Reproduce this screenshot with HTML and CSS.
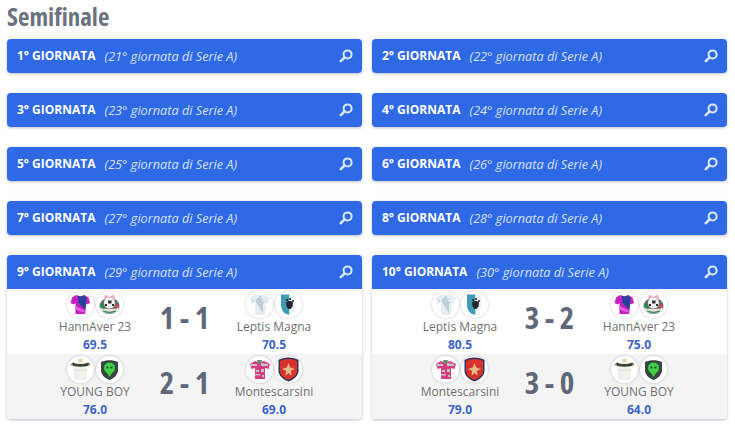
FILE: index.html
```html
<!DOCTYPE html>
<html lang="it">
<head>
  <meta charset="UTF-8">
  <title>Semifinale</title>
  <link rel="stylesheet" href="styles.css">
</head>
<body>
  <svg class="sprites" width="0" height="0">
    <symbol id="search" viewBox="0 0 14 14">
      <circle cx="8.6" cy="5.4" r="4" fill="none" stroke="currentColor" stroke-width="2"/>
      <path d="M5.6 8.4 1.8 12.2" stroke="currentColor" stroke-width="2.6" stroke-linecap="round"/>
    </symbol>
    <symbol id="hann-shirt" viewBox="0 0 27 27">
      <path d="M9 4 5 6.500 3.500 12l3.500 1.500L8.500 12v11h10V12l1.500 1.500L23 12l-1.500-5.500L17.500 4l-4 1.500z" fill="#c81fc4"/>
      <path d="M11 4.500 13.500 5.500 16 4.500 19.500 6.500 18.500 19 11.500 12z" fill="#24409a"/>
      <path d="M8.500 15l10 5v2l-10-3.500z" fill="#e05fe0"/>
    </symbol>
    <symbol id="hann-badge" viewBox="0 0 27 27">
      <ellipse cx="13.500" cy="15" rx="10" ry="8" fill="#5d6f66"/>
      <path d="M9 3.500l4 2.500 5-2.500 1 5H8z" fill="#e6a8c8"/>
      <circle cx="13.500" cy="12" r="5.500" fill="#f1f1f1"/>
      <path d="M12 9.500h3.500v3H12zM9 13h2v2H9zM16 13h2v2h-2z" fill="#333"/>
      <path d="M3.500 16c4 2.500 16 2.500 20 0l-1.500 4.500c-4 2.500-13 2.500-17 0z" fill="#e9dcdc"/>
      <path d="M4 13l4 1.500v3.500l-4-1.500z" fill="#2f8a58"/>
      <path d="M23 13l-4 1.500v3.500l4-1.500z" fill="#c94b4b"/>
      <path d="M7 19.500c4 1.500 9 1.500 13 0l-.5 1.500c-4 1.200-8 1.200-12 0z" fill="#2f8a58"/>
    </symbol>
    <symbol id="leptis-shirt" viewBox="0 0 27 27">
      <path d="M9 3.500 3.500 7 5.500 13l3.500-1v12h10V12l2.500 1L24 7l-6-3.500-4 1.500z" fill="#e6edf0"/>
      <path d="M16 4c-4 2-7 4.500-6 7 1 3 3.500 3.500 4 7l3 4V13l2-2-3.500-1 2-3-3.500 1z" fill="#bccfd8"/>
      <path d="M6 8l3 2-3 1zM20 15h-1v5z" fill="#cddbe2"/>
    </symbol>
    <symbol id="leptis-badge" viewBox="0 0 27 27">
      <path d="M6 3.500H14.500V24L10 22.500C7 20 6 17 6 13.500z" fill="#3f9cb4"/>
      <path d="M14.500 3.500H20V14c0 4-2 7.500-5.500 10z" fill="#eef3f5"/>
      <path d="M11 11.500l2-1.500h3l2 1.500-.5 4-2 2.500h-2l-2-2.500z" fill="#23282c"/>
      <circle cx="12" cy="9" r="1.100" fill="#23282c"/>
      <circle cx="15" cy="8" r="1.100" fill="#23282c"/>
      <circle cx="18" cy="10" r="1.100" fill="#23282c"/>
    </symbol>
    <symbol id="young-shirt" viewBox="0 0 27 27">
      <path d="M7 7h13l3 4-3 2.500V24H7V13.500L4 11z" fill="#f1f1ec"/>
      <path d="M7 13.500h13v1.500H7z" fill="#e6e6e0"/>
      <path d="M3.500 8.500c4 3 16 3 20 0l-2.500-2c-4 2-11 2-15 0z" fill="#3c3d33"/>
      <path d="M10.500 3h6L15.500 6.500h-4z" fill="#e3d9a8"/>
      <path d="M3.500 9l2-1v2zM23.500 9l-2-1v2z" fill="#d9c98a"/>
    </symbol>
    <symbol id="young-badge" viewBox="0 0 27 27">
      <path d="M5 6c5-2.500 12-2.500 17 0v8c0 4.500-3.500 8-8.500 10C8.500 22 5 18.500 5 14z" fill="#3a4640"/>
      <ellipse cx="13.500" cy="12" rx="5.500" ry="5.500" fill="#3fd148"/>
      <path d="M10.500 16h6l-3 5z" fill="#3fd148"/>
      <circle cx="11.500" cy="11.500" r="1.100" fill="#1d3a20"/>
      <circle cx="15.500" cy="11.500" r="1.100" fill="#1d3a20"/>
    </symbol>
    <symbol id="monte-shirt" viewBox="0 0 27 27">
      <path d="M9 5 4 8l1.500 5 3.500-1v11h10V12l3.500 1L24 8l-6-3-4.500 1.500z" fill="#d83c80"/>
      <path d="M5 8h6v2H5zM15 7l7 1v2h-7zM10 14h3v2h-3zM15 13h3v3h-3zM9 18h5v1.500H9zM16 19h2v2h-2z" fill="#bfc7c5"/>
      <path d="M11 4h5l-1 3.500h-3z" fill="#5f8f6e"/>
    </symbol>
    <symbol id="monte-badge" viewBox="0 0 27 27">
      <path d="M13.500 1.500c4.500 0 7.500 1 10 2.500V15c0 4.500-4.500 8.500-10 10.500C8 23.500 3.500 19.500 3.500 15V4C6 2.500 9 1.500 13.500 1.500z" fill="#2c3566"/>
      <path d="M13.500 3c4 0 6.500.8 8.500 2V15c0 4-3.500 7-8.500 9C8.500 22 5 19 5 15V5c2-1.200 4.500-2 8.500-2z" fill="#d9322a"/>
      <path d="M13.500 7l1.800 4.500L20 13l-4 1.800.5 5L13.500 17l-3 2.800.5-5-4-1.800 4.700-1.500z" fill="#e3b98a"/>
    </symbol>
  </svg>

  <h1 class="title">Semifinale</h1>

  <div class="rounds">
    <div class="round">
      <div class="round-head"><b>1° GIORNATA</b><i>(21° giornata di Serie A)</i><svg class="search"><use href="#search"/></svg></div>
    </div>
    <div class="round">
      <div class="round-head"><b>2° GIORNATA</b><i>(22° giornata di Serie A)</i><svg class="search"><use href="#search"/></svg></div>
    </div>
    <div class="round">
      <div class="round-head"><b>3° GIORNATA</b><i>(23° giornata di Serie A)</i><svg class="search"><use href="#search"/></svg></div>
    </div>
    <div class="round">
      <div class="round-head"><b>4° GIORNATA</b><i>(24° giornata di Serie A)</i><svg class="search"><use href="#search"/></svg></div>
    </div>
    <div class="round">
      <div class="round-head"><b>5° GIORNATA</b><i>(25° giornata di Serie A)</i><svg class="search"><use href="#search"/></svg></div>
    </div>
    <div class="round">
      <div class="round-head"><b>6° GIORNATA</b><i>(26° giornata di Serie A)</i><svg class="search"><use href="#search"/></svg></div>
    </div>
    <div class="round">
      <div class="round-head"><b>7° GIORNATA</b><i>(27° giornata di Serie A)</i><svg class="search"><use href="#search"/></svg></div>
    </div>
    <div class="round">
      <div class="round-head"><b>8° GIORNATA</b><i>(28° giornata di Serie A)</i><svg class="search"><use href="#search"/></svg></div>
    </div>

    <div class="round">
      <div class="round-head"><b>9° GIORNATA</b><i>(29° giornata di Serie A)</i><svg class="search"><use href="#search"/></svg></div>
      <div class="match">
        <div class="team">
          <div class="logos">
            <span class="logo"><svg><use href="#hann-shirt"/></svg></span>
            <span class="logo"><svg><use href="#hann-badge"/></svg></span>
          </div>
          <div class="name">HannAver 23</div>
          <div class="points">69.5</div>
        </div>
        <div class="score">1 - 1</div>
        <div class="team">
          <div class="logos">
            <span class="logo"><svg><use href="#leptis-shirt"/></svg></span>
            <span class="logo"><svg><use href="#leptis-badge"/></svg></span>
          </div>
          <div class="name">Leptis Magna</div>
          <div class="points">70.5</div>
        </div>
      </div>
      <div class="match alt">
        <div class="team">
          <div class="logos">
            <span class="logo"><svg><use href="#young-shirt"/></svg></span>
            <span class="logo"><svg><use href="#young-badge"/></svg></span>
          </div>
          <div class="name">YOUNG BOY</div>
          <div class="points">76.0</div>
        </div>
        <div class="score">2 - 1</div>
        <div class="team">
          <div class="logos">
            <span class="logo"><svg><use href="#monte-shirt"/></svg></span>
            <span class="logo"><svg><use href="#monte-badge"/></svg></span>
          </div>
          <div class="name">Montescarsini</div>
          <div class="points">69.0</div>
        </div>
      </div>
    </div>

    <div class="round">
      <div class="round-head"><b>10° GIORNATA</b><i>(30° giornata di Serie A)</i><svg class="search"><use href="#search"/></svg></div>
      <div class="match">
        <div class="team">
          <div class="logos">
            <span class="logo"><svg><use href="#leptis-shirt"/></svg></span>
            <span class="logo"><svg><use href="#leptis-badge"/></svg></span>
          </div>
          <div class="name">Leptis Magna</div>
          <div class="points">80.5</div>
        </div>
        <div class="score">3 - 2</div>
        <div class="team">
          <div class="logos">
            <span class="logo"><svg><use href="#hann-shirt"/></svg></span>
            <span class="logo"><svg><use href="#hann-badge"/></svg></span>
          </div>
          <div class="name">HannAver 23</div>
          <div class="points">75.0</div>
        </div>
      </div>
      <div class="match alt">
        <div class="team">
          <div class="logos">
            <span class="logo"><svg><use href="#monte-shirt"/></svg></span>
            <span class="logo"><svg><use href="#monte-badge"/></svg></span>
          </div>
          <div class="name">Montescarsini</div>
          <div class="points">79.0</div>
        </div>
        <div class="score">3 - 0</div>
        <div class="team">
          <div class="logos">
            <span class="logo"><svg><use href="#young-shirt"/></svg></span>
            <span class="logo"><svg><use href="#young-badge"/></svg></span>
          </div>
          <div class="name">YOUNG BOY</div>
          <div class="points">64.0</div>
        </div>
      </div>
    </div>
  </div>
</body>
</html>
```

FILE: styles.css
```css
html, body {
  margin: 0;
  padding: 0;
  height: 100%;
  overflow: hidden;
  background: #fff;
}
body {
  padding: 0 8px 0 7px;
  font-family: "Open Sans", sans-serif;
  color: #707070;
}
.sprites {
  display: none;
}
.title {
  margin: 0;
  height: 39px;
  line-height: 33px;
  font-size: 25px;
  font-weight: 700;
  font-stretch: 75%;
  color: #6b7280;
}
.rounds {
  display: grid;
  grid-template-columns: 355px 355px;
  column-gap: 10px;
  row-gap: 20px;
  align-items: start;
}
.round {
  border-radius: 4px;
  background: #fff;
  box-shadow: 0 1px 3px rgba(60, 70, 100, 0.35);
  overflow: hidden;
}
.round-head {
  display: flex;
  align-items: center;
  height: 33px;
  padding: 0 9px 1px 10px;
  background: #2f69e6;
  color: #fff;
  font-size: 12px;
}
.round-head b {
  font-weight: 700;
}
.round-head i {
  margin-left: 9px;
  font-size: 12.7px;
  color: #d6e2fa;
}
.search {
  width: 14px;
  height: 14px;
  margin-left: auto;
  color: #dce7fb;
}
.match {
  display: grid;
  grid-template-columns: 118px 61px 118px;
  justify-content: center;
  height: 65px;
}
.match.alt {
  background: #f4f4f4;
}
.team {
  display: flex;
  flex-direction: column;
  align-items: center;
  padding-top: 2px;
}
.logos {
  display: flex;
  gap: 2px;
}
.logo {
  width: 27px;
  height: 27px;
  border-radius: 50%;
  background: #fff;
  box-shadow: 0 0 3px rgba(0, 0, 0, 0.22);
}
.logo svg {
  display: block;
  width: 27px;
  height: 27px;
  filter: blur(0.4px);
}
.name {
  font-size: 12px;
  line-height: 17px;
  white-space: nowrap;
}
.points {
  margin-top: 1px;
  font-size: 12px;
  line-height: 17px;
  font-weight: 700;
  color: #3b63c4;
}
.score {
  font-size: 31px;
  line-height: 57px;
  font-weight: 700;
  font-stretch: 75%;
  text-align: center;
  white-space: nowrap;
  color: #5f6878;
}
```
